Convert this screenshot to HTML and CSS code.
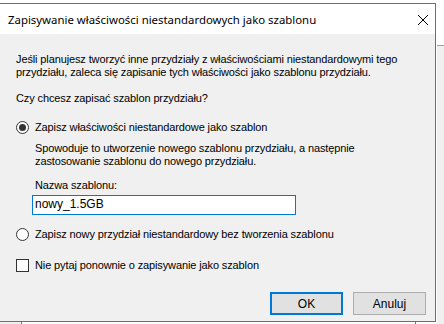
FILE: index.html
```html
<!DOCTYPE html>
<html lang="pl">
<head>
  <meta charset="UTF-8" />
  <title>Zapisywanie właściwości niestandardowych jako szablonu</title>
  <link rel="stylesheet" href="styles.css">
</head>
<body>
  <div class="dialog">
    <div class="titlebar">
      <span class="title">Zapisywanie właściwości niestandardowych jako szablonu</span>
      <svg class="close" width="12" height="12" viewBox="0 0 12 12">
        <path d="M1 1 L11 11 M11 1 L1 11" stroke="#000" stroke-width="1" fill="none" />
      </svg>
    </div>
    <div class="content">
      <p class="intro">Jeśli planujesz tworzyć inne przydziały z właściwościami niestandardowymi tego<br>przydziału, zaleca się zapisanie tych właściwości jako szablonu przydziału.</p>
      <p class="question">Czy chcesz zapisać szablon przydziału?</p>
      <label class="option">
        <span class="radio checked"></span>
        <span>Zapisz właściwości niestandardowe jako szablon</span>
      </label>
      <div class="indent">
        <p class="hint">Spowoduje to utworzenie nowego szablonu przydziału, a następnie<br>zastosowanie szablonu do nowego przydziału.</p>
        <p class="field-label">Nazwa szablonu:</p>
        <div class="input">nowy_1.5GB</div>
      </div>
      <label class="option second">
        <span class="radio"></span>
        <span>Zapisz nowy przydział niestandardowy bez tworzenia szablonu</span>
      </label>
      <label class="option third">
        <span class="check"></span>
        <span>Nie pytaj ponownie o zapisywanie jako szablon</span>
      </label>
      <div class="buttons">
        <button class="btn default">OK</button>
        <button class="btn">Anuluj</button>
      </div>
    </div>
  </div>
  <div class="behind-right"></div>
  <div class="behind"><div class="behind-left"></div><div class="behind-mid"></div></div>
</body>
</html>
```

FILE: styles.css
```css
* { box-sizing: border-box; margin: 0; padding: 0; }
body {
  width: 444px; height: 324px;
  background: #ffffff;
  font-family: 'Liberation Sans', Arial, sans-serif;
  font-size: 11px;
  letter-spacing: -0.12px;
  color: #000;
  padding-top: 3px;
  overflow: hidden;
  position: relative;
}
.dialog {
  width: 437px; height: 319px;
  margin-left: -1px;
  border: 1px solid #707070;
  background: #f0f0f0;
  display: flex; flex-direction: column;
  position: relative; z-index: 1;
}
.titlebar {
  height: 30px; background: #fff;
  display: flex; align-items: center; justify-content: space-between;
  padding: 0 6px 0 8px;
}
.title {
  font-family: 'Noto Sans', 'Open Sans', sans-serif;
  font-size: 11.4px;
  letter-spacing: 0;
  padding-top: 1px;
}
.close { margin-top: 1px; }
.content {
  flex: 1;
  padding: 19px 0 0 16px;
  display: flex; flex-direction: column;
  line-height: 13px;
}
.question { margin-top: 13px; }
.option {
  display: flex; align-items: center; gap: 6px;
  margin-top: 15px; height: 14px;
}
.option.second { margin-top: 12px; }
.option.third { margin-top: 17px; }
.radio {
  width: 13px; height: 13px; border-radius: 50%;
  border: 1px solid #333;
  background: #fff;
  display: flex; align-items: center; justify-content: center;
}
.radio.checked::after {
  content: ''; width: 7px; height: 7px; border-radius: 50%; background: #333;
}
.check {
  width: 13px; height: 13px; border: 1px solid #333; background: #fff;
}
.indent { padding-left: 19px; }
.hint { margin-top: 8px; }
.field-label { margin-top: 11px; }
.input {
  margin-top: 3px; margin-left: -3px;
  width: 264px; height: 20px;
  border: 1px solid #0078d7;
  background: #fff;
  padding: 2px 0 0 2px;
  font-size: 12px;
  letter-spacing: 0;
}
.buttons {
  margin-top: auto; margin-bottom: 6px;
  display: flex; justify-content: flex-end; gap: 10px;
  padding-right: 9px;
}
.btn {
  width: 73px; height: 23px;
  background: #e1e1e1;
  border: 1px solid #adadad;
  font-family: 'Liberation Sans', Arial, sans-serif;
  font-size: 12px; color: #000;
}
.btn.default { border: 2px solid #0078d7; }
.behind-right {
  position: absolute; left: 437px; top: 45px; width: 7px; height: 279px;
  background: #f0f0f0; border-top: 1px solid #a0a0a0;
}
.behind {
  position: absolute; left: 0; top: 321px; width: 444px; height: 3px;
  display: flex;
}
.behind-left { width: 22px; background: #f0f0f0; border-right: 1px solid #707070; }
.behind-mid { width: 394px; border-right: 1px solid #707070; }
```
